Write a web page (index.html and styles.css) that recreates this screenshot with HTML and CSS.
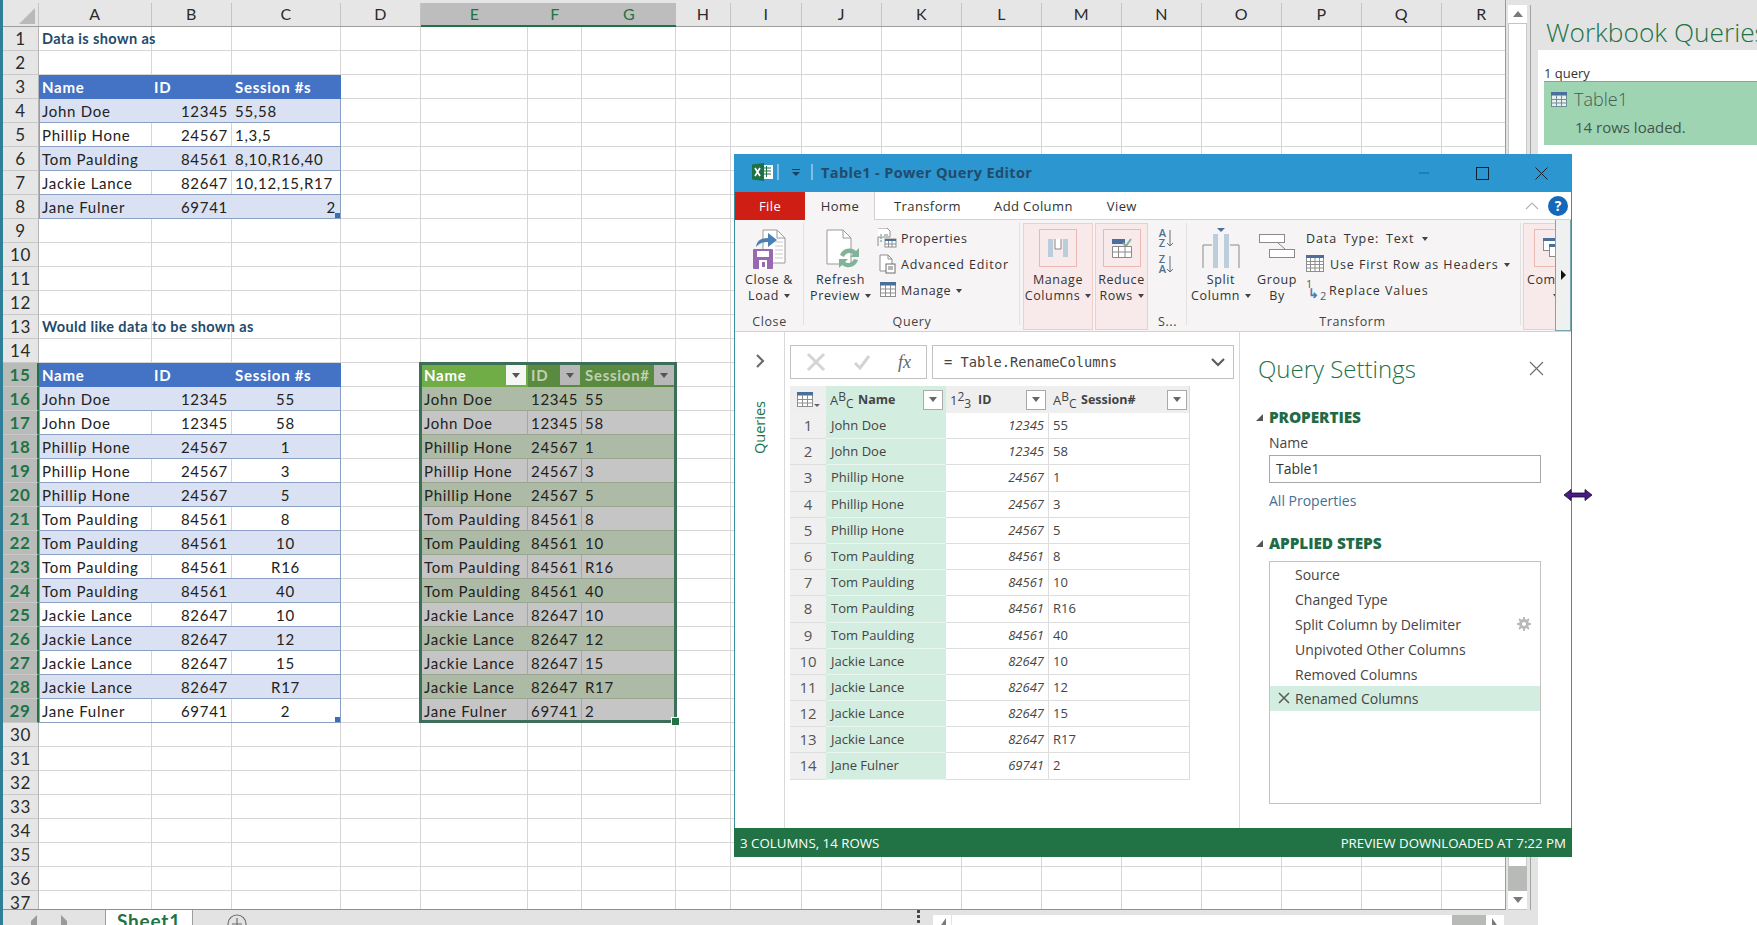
FILE: index.html
```html
<!DOCTYPE html>
<html lang="en">
<head>
<meta charset="utf-8">
<title>Table1 - Power Query Editor</title>
<link rel="stylesheet" href="styles.css">
</head>
<body>
<div class="app">
  <div class="strip"></div>
  <div class="excel">
    <div class="sheet-area">
      <div class="grid">
        <div class="col-head">
          <div class="corner"><svg width="16" height="16" viewBox="0 0 16 16"><path d="M16 0V16H0Z" fill="#b9b9b9"/></svg></div>
          <div class="ch">A</div><div class="ch">B</div><div class="ch">C</div><div class="ch">D</div>
          <div class="ch on">E</div><div class="ch on">F</div><div class="ch on">G</div>
          <div class="ch">H</div><div class="ch">I</div><div class="ch">J</div><div class="ch">K</div><div class="ch">L</div><div class="ch">M</div><div class="ch">N</div><div class="ch">O</div><div class="ch">P</div><div class="ch">Q</div><div class="ch">R</div>
        </div>
        <div class="rows">
          <div class="row"><div class="rh">1</div><div class="cell title">Data is shown as</div></div>
          <div class="row"><div class="rh">2</div></div>
          <div class="row"><div class="rh">3</div><div class="cell thead">Name</div><div class="cell thead">ID</div><div class="cell thead">Session #s</div></div>
          <div class="row odd"><div class="rh">4</div><div class="cell t a">John Doe</div><div class="cell t num">12345</div><div class="cell t z">55,58</div></div>
          <div class="row even"><div class="rh">5</div><div class="cell t a">Phillip Hone</div><div class="cell t num">24567</div><div class="cell t z">1,3,5</div></div>
          <div class="row odd"><div class="rh">6</div><div class="cell t a">Tom Paulding</div><div class="cell t num">84561</div><div class="cell t z">8,10,R16,40</div></div>
          <div class="row even"><div class="rh">7</div><div class="cell t a">Jackie Lance</div><div class="cell t num">82647</div><div class="cell t z">10,12,15,R17</div></div>
          <div class="row odd"><div class="rh">8</div><div class="cell t a">Jane Fulner</div><div class="cell t num">69741</div><div class="cell t z num">2<i class="grip"></i></div></div>
          <div class="row"><div class="rh">9</div></div>
          <div class="row"><div class="rh">10</div></div>
          <div class="row"><div class="rh">11</div></div>
          <div class="row"><div class="rh">12</div></div>
          <div class="row"><div class="rh">13</div><div class="cell title">Would like data to be shown as</div></div>
          <div class="row"><div class="rh">14</div></div>
          <div class="row"><div class="rh on">15</div><div class="cell thead">Name</div><div class="cell thead">ID</div><div class="cell thead">Session #s</div><div class="cell shead active e">Name<b class="fb white"></b></div><div class="cell shead">ID<b class="fb"></b></div><div class="cell shead">Session#<b class="fb"></b></div></div>
          <div class="row odd"><div class="rh on">16</div><div class="cell t a">John Doe</div><div class="cell t num">12345</div><div class="cell t mid">55</div><div class="cell s e">John Doe</div><div class="cell s num">12345</div><div class="cell s">55</div></div>
          <div class="row even"><div class="rh on">17</div><div class="cell t a">John Doe</div><div class="cell t num">12345</div><div class="cell t mid">58</div><div class="cell s e">John Doe</div><div class="cell s num">12345</div><div class="cell s">58</div></div>
          <div class="row odd"><div class="rh on">18</div><div class="cell t a">Phillip Hone</div><div class="cell t num">24567</div><div class="cell t mid">1</div><div class="cell s e">Phillip Hone</div><div class="cell s num">24567</div><div class="cell s">1</div></div>
          <div class="row even"><div class="rh on">19</div><div class="cell t a">Phillip Hone</div><div class="cell t num">24567</div><div class="cell t mid">3</div><div class="cell s e">Phillip Hone</div><div class="cell s num">24567</div><div class="cell s">3</div></div>
          <div class="row odd"><div class="rh on">20</div><div class="cell t a">Phillip Hone</div><div class="cell t num">24567</div><div class="cell t mid">5</div><div class="cell s e">Phillip Hone</div><div class="cell s num">24567</div><div class="cell s">5</div></div>
          <div class="row even"><div class="rh on">21</div><div class="cell t a">Tom Paulding</div><div class="cell t num">84561</div><div class="cell t mid">8</div><div class="cell s e">Tom Paulding</div><div class="cell s num">84561</div><div class="cell s">8</div></div>
          <div class="row odd"><div class="rh on">22</div><div class="cell t a">Tom Paulding</div><div class="cell t num">84561</div><div class="cell t mid">10</div><div class="cell s e">Tom Paulding</div><div class="cell s num">84561</div><div class="cell s">10</div></div>
          <div class="row even"><div class="rh on">23</div><div class="cell t a">Tom Paulding</div><div class="cell t num">84561</div><div class="cell t mid">R16</div><div class="cell s e">Tom Paulding</div><div class="cell s num">84561</div><div class="cell s">R16</div></div>
          <div class="row odd"><div class="rh on">24</div><div class="cell t a">Tom Paulding</div><div class="cell t num">84561</div><div class="cell t mid">40</div><div class="cell s e">Tom Paulding</div><div class="cell s num">84561</div><div class="cell s">40</div></div>
          <div class="row even"><div class="rh on">25</div><div class="cell t a">Jackie Lance</div><div class="cell t num">82647</div><div class="cell t mid">10</div><div class="cell s e">Jackie Lance</div><div class="cell s num">82647</div><div class="cell s">10</div></div>
          <div class="row odd"><div class="rh on">26</div><div class="cell t a">Jackie Lance</div><div class="cell t num">82647</div><div class="cell t mid">12</div><div class="cell s e">Jackie Lance</div><div class="cell s num">82647</div><div class="cell s">12</div></div>
          <div class="row even"><div class="rh on">27</div><div class="cell t a">Jackie Lance</div><div class="cell t num">82647</div><div class="cell t mid">15</div><div class="cell s e">Jackie Lance</div><div class="cell s num">82647</div><div class="cell s">15</div></div>
          <div class="row odd"><div class="rh on">28</div><div class="cell t a">Jackie Lance</div><div class="cell t num">82647</div><div class="cell t mid">R17</div><div class="cell s e">Jackie Lance</div><div class="cell s num">82647</div><div class="cell s">R17</div></div>
          <div class="row even"><div class="rh on">29</div><div class="cell t a">Jane Fulner</div><div class="cell t num">69741</div><div class="cell t mid">2<i class="grip"></i></div><div class="cell s e">Jane Fulner</div><div class="cell s num">69741</div><div class="cell s">2</div></div>
          <div class="row"><div class="rh">30</div></div>
          <div class="row"><div class="rh">31</div></div>
          <div class="row"><div class="rh">32</div></div>
          <div class="row"><div class="rh">33</div></div>
          <div class="row"><div class="rh">34</div></div>
          <div class="row"><div class="rh">35</div></div>
          <div class="row"><div class="rh">36</div></div>
          <div class="row"><div class="rh">37</div></div>
          <div class="selection"><i class="sel-handle"></i></div>
        </div>
      </div>
      <div class="vscroll">
        <div class="sb-btn"><svg width="10" height="6" viewBox="0 0 10 6"><path d="M5 0L10 6H0Z" fill="#7a7a7a"/></svg></div>
        <div class="sb-track"></div>
        <div class="sb-thumb"></div>
        <div class="sb-btn"><svg width="10" height="6" viewBox="0 0 10 6"><path d="M0 0H10L5 6Z" fill="#7a7a7a"/></svg></div>
      </div>
    </div>
    <div class="tabs">
      <svg class="nav" width="46" height="15" viewBox="0 0 46 15"><path d="M0 11L6 5V15H0Z" fill="#9a9a9a"/><path d="M30 5L36 11V15H30Z" fill="#9a9a9a"/></svg>
      <div class="sheet-tab">Sheet1</div>
      <svg class="plus" width="20" height="15" viewBox="0 0 20 15"><circle cx="10" cy="14" r="9" fill="none" stroke="#6e6e6e" stroke-width="1.2"/><path d="M10 8V15M5 14H15" stroke="#6e6e6e" stroke-width="1.2"/></svg>
      <div class="dots"></div>
      <div class="hscroll">
        <div class="hs-btn"><svg width="7" height="10" viewBox="0 0 7 10"><path d="M7 0V10H0Z" fill="#7a7a7a"/></svg></div>
        <div class="hs-track"></div>
        <div class="hs-thumb"></div>
        <div class="hs-btn"><svg width="7" height="10" viewBox="0 0 7 10"><path d="M0 0V10H7Z" fill="#7a7a7a"/></svg></div>
      </div>
    </div>
  </div>
  <aside class="pane">
    <div class="pane-head">Workbook Queries</div>
    <div class="pane-body">
      <div class="pane-count">1 query</div>
      <div class="pane-card">
        <div class="pane-name">
          <svg width="16" height="15" viewBox="0 0 16 15"><rect x=".5" y=".5" width="15" height="14" fill="#e8f0ee" stroke="#6f8f94"/><rect width="16" height="3.5" fill="#4a6f9c"/><path d="M0 7.5H16M0 11H16M5.5 3V15M10.5 3V15" stroke="#6f8f94"/></svg>
          <span>Table1</span>
        </div>
        <div class="pane-loaded">14 rows loaded.</div>
      </div>
    </div>
  </aside>
</div>

<section class="modal">
  <header class="titlebar">
    <svg class="xl" width="21" height="18" viewBox="0 0 21 18"><rect x="8" y="2" width="13" height="14" fill="#fff"/><path d="M11 5H19M11 8H19M11 11H19M14.500 3V14" stroke="#1e7145"/><path d="M0 1.500L12 0V18L0 16.500Z" fill="#1e7145"/><path d="M3 5L8 13M8 5L3 13" stroke="#fff" stroke-width="1.700"/></svg>
    <i class="tb-sep"></i>
    <svg class="qat" width="8" height="7" viewBox="0 0 8 7"><path d="M0 0H8V1H0ZM0 3H8L4 7Z" fill="#1c3f5e"/></svg>
    <i class="tb-sep"></i>
    <div class="title">Table1 - Power Query Editor</div>
    <div class="winbtns">
      <svg width="12" height="12" viewBox="0 0 12 12"><path d="M1 6H11" stroke="#1567b5"/></svg>
      <svg width="13" height="13" viewBox="0 0 13 13"><rect x=".5" y=".5" width="12" height="12" fill="none" stroke="#10202e"/></svg>
      <svg width="13" height="13" viewBox="0 0 13 13"><path d="M.5 .5L12.500 12.500M12.500 .5L.5 12.500" stroke="#10202e"/></svg>
    </div>
  </header>
  <nav class="tabbar">
    <div class="tab file">File</div>
    <div class="tab home">Home</div>
    <div class="tab transform">Transform</div>
    <div class="tab addcol">Add Column</div>
    <div class="tab view">View</div>
    <svg class="collapse" width="14" height="8" viewBox="0 0 14 8"><path d="M1 7L7 1L13 7" fill="none" stroke="#b5b5b5" stroke-width="1.200"/></svg>
    <div class="help">?</div>
  </nav>
  <div class="ribbon">
    <div class="group g-close">
      <div class="g-body">
        <div class="big w-close">
          <svg class="ic" width="34" height="40" viewBox="0 0 34 40"><path d="M11 1H25L33 9V34H11Z" fill="#fff" stroke="#9a9a9a"/><path d="M25 1V9H33" fill="none" stroke="#9a9a9a"/><path d="M23 13H31M23 17H31M23 21H31M23 25H31M23 29H31" stroke="#c8c8c8"/><path d="M4 18C5 11 10 9 16 9V4L25 11L16 18V13C11 13 8 14 4 18Z" fill="#4a80b4"/><rect x="1" y="20" width="20" height="20" rx="1" fill="#9a68b0"/><rect x="5" y="22" width="12" height="6" fill="#fff"/><rect x="7" y="31" width="8" height="9" fill="#fff"/><rect x="10" y="33" width="3" height="5" fill="#9a68b0"/></svg>
          <span class="lbl">Close &amp;<br>Load <i class="caret"></i></span>
        </div>
      </div>
      <div class="g-label">Close</div>
    </div>
    <div class="group g-query">
      <div class="g-body">
        <div class="big w-refresh">
          <svg class="ic" width="36" height="40" viewBox="0 0 36 40"><path d="M4 1H20L28 9V35H4Z" fill="#fff" stroke="#9a9a9a"/><path d="M20 1V9H28" fill="none" stroke="#9a9a9a"/><path d="M17 26A10 10 0 0 1 33 22L36 19V28H27L30 25A6 6 0 0 0 21 28Z" fill="#7fb49a"/><path d="M35 31A10 10 0 0 1 19 36L16 39V30H25L22 33A6 6 0 0 0 31 30Z" fill="#7fb49a"/></svg>
          <span class="lbl">Refresh<br>Preview <i class="caret"></i></span>
        </div>
        <div class="smalls q-smalls">
          <div class="small"><svg width="20" height="20" viewBox="0 0 20 20"><path d="M1 1H10L13 4V10H1V19" fill="#fff" stroke="#8e8e8e" transform="translate(0 -1)"/><path d="M3 7H5M7 7H11M3 10H5M3 13H5" stroke="#5f8f8f"/><rect x="8" y="11" width="11" height="8" fill="#fff" stroke="#8e8e8e"/><rect x="8" y="11" width="11" height="2" fill="#4a6f9c"/><path d="M8 16H19M11.500 13V19M15 13V19" stroke="#8e8e8e"/></svg><span>Properties</span></div>
          <div class="small wide"><svg width="20" height="20" viewBox="0 0 20 20"><path d="M3 1H11L15 5V17H3Z" fill="#fff" stroke="#8e8e8e"/><path d="M11 1V5H15" fill="none" stroke="#8e8e8e"/><rect x="9" y="10" width="9" height="9" fill="#fff" stroke="#6d6d6d"/><path d="M11 13H16M11 15H16" stroke="#6d6d6d"/></svg><span>Advanced Editor</span></div>
          <div class="small"><svg width="20" height="20" viewBox="0 0 20 20"><rect x="3.500" y="2.500" width="15" height="14" fill="#fff" stroke="#8e8e8e"/><rect x="3" y="2" width="16" height="3.500" fill="#4a6f9c"/><path d="M3 9H19M3 13H19M8.500 5V17M13.500 5V17" stroke="#8e8e8e"/></svg><span>Manage <i class="caret"></i></span></div>
        </div>
      </div>
      <div class="g-label">Query</div>
    </div>
    <div class="pink p-manage">
      <div class="pink-box"><svg width="20" height="20" viewBox="0 0 20 20"><rect x="0" y="1" width="5" height="18" fill="#b9cddd"/><rect x="15" y="1" width="5" height="18" fill="#b9cddd"/><path d="M7 1V11H13V1" fill="#fff" stroke="#888"/></svg></div>
      <span class="lbl">Manage<br>Columns <i class="caret"></i></span>
    </div>
    <div class="pink p-reduce">
      <div class="pink-box"><svg width="20" height="20" viewBox="0 0 20 20"><rect x="0" y="1" width="13" height="5" fill="#4a6f9c"/><path d="M11 5L14 8L19 1" fill="none" stroke="#7fb29a" stroke-width="2"/><path d="M.5 8.500H19.500V19.500H.5ZM0 14H20M6.500 8V20M13 8V20" fill="#fff" stroke="#8a8a8a"/></svg></div>
      <span class="lbl">Reduce<br>Rows <i class="caret"></i></span>
    </div>
    <div class="group g-sort">
      <div class="g-body sort-icons">
        <div class="sort"><span>A<br>Z</span><svg width="8" height="20" viewBox="0 0 8 20"><path d="M4 2V18M1 15L4 18L7 15" fill="none" stroke="#5e6f7c"/></svg></div>
        <div class="sort"><span>Z<br>A</span><svg width="8" height="20" viewBox="0 0 8 20"><path d="M4 2V18M1 15L4 18L7 15" fill="none" stroke="#5e6f7c"/></svg></div>
      </div>
      <div class="g-label">S...</div>
    </div>
    <div class="group g-transform">
      <div class="g-body">
        <div class="big w-split">
          <svg class="ic" width="38" height="42" viewBox="0 0 38 42"><path d="M15 0H23L19 4Z" fill="#4a6f9c"/><path d="M1 40V17H10M37 40V17H28" fill="none" stroke="#8a8a8a"/><rect x="11" y="6" width="5" height="34" fill="#bccddc"/><rect x="22" y="6" width="5" height="34" fill="#bccddc"/></svg>
          <span class="lbl">Split<br>Column <i class="caret"></i></span>
        </div>
        <div class="big w-group">
          <svg class="ic" width="38" height="42" viewBox="0 0 38 42"><rect x="1.500" y="6.500" width="25" height="8" fill="#fff" stroke="#8a8a8a"/><rect x="11.500" y="21.500" width="25" height="8" fill="#fff" stroke="#8a8a8a"/><path d="M20 15L27 21" stroke="#8a8a8a"/></svg>
          <span class="lbl">Group<br>By</span>
        </div>
        <div class="smalls tf">
          <div class="small plain"><span>Data Type: Text <i class="caret"></i></span></div>
          <div class="small"><svg width="18" height="18" viewBox="0 0 18 18"><rect x=".5" y=".5" width="17" height="16" fill="#fff" stroke="#8e8e8e"/><rect width="18" height="3" fill="#4a6f9c"/><path d="M0 6.500H18M0 9.500H18M0 13H18M4.500 3V17M9 3V17M13.500 3V17" stroke="#8e8e8e"/></svg><span>Use First Row as Headers <i class="caret"></i></span></div>
          <div class="small"><span class="repl"><em>1</em><b>&#8627;</b><em>2</em></span><span>Replace Values</span></div>
        </div>
      </div>
      <div class="g-label">Transform</div>
    </div>
    <div class="pink p-combine">
      <div class="pink-box"><svg width="20" height="20" viewBox="0 0 20 20"><rect x=".5" y=".5" width="12" height="12" fill="#fff" stroke="#8a8a8a"/><rect width="13" height="3" fill="#4a6f9c"/><rect x="6.500" y="6.500" width="12" height="12" fill="#fff" stroke="#8a8a8a"/><rect x="6" y="6" width="13" height="3" fill="#4a6f9c"/></svg></div>
      <span class="lbl">Combine<br><i class="caret"></i></span>
    </div>
    <div class="rib-scroll"><svg width="5" height="10" viewBox="0 0 5 10"><path d="M0 0L5 5L0 10Z" fill="#111"/></svg></div>
  </div>
  <div class="content">
    <div class="queries">
      <svg width="10" height="14" viewBox="0 0 10 14"><path d="M2 1L8 7L2 13" fill="none" stroke="#6c6c6c" stroke-width="2.200"/></svg>
      <div class="q-label">Queries</div>
    </div>
    <div class="main">
      <div class="fbar">
        <div class="fx">
          <svg width="20" height="20" viewBox="0 0 20 20"><path d="M2 2L18 18M18 2L2 18" stroke="#d4d4d4" stroke-width="3"/></svg>
          <svg width="18" height="16" viewBox="0 0 18 16"><path d="M2 9L7 14L16 2" fill="none" stroke="#d4d4d4" stroke-width="3"/></svg>
          <span class="fx-t">fx</span>
        </div>
        <div class="formula"><span>= Table.RenameColumns</span><svg width="14" height="9" viewBox="0 0 14 9"><path d="M1 1L7 7L13 1" fill="none" stroke="#5c5c5c" stroke-width="2.200"/></svg></div>
      </div>
      <div class="dt">
        <div class="dt-row dt-head">
          <div class="dh dh-i"><svg width="23" height="16" viewBox="0 0 23 16"><rect x=".5" y=".5" width="15" height="14" fill="#fff" stroke="#8e8e8e"/><rect width="16" height="3.500" fill="#4a6f9c"/><path d="M0 7.500H16M0 11H16M5.500 3V15M10.500 3V15" stroke="#8e8e8e"/><path d="M17 12H23L20 15Z" fill="#666"/></svg></div>
          <div class="dh dh-n"><span class="ty">A<sup>B</sup><sub>C</sub></span><b>Name</b><i class="dd"></i></div>
          <div class="dh"><span class="ty">1<sup>2</sup><sub>3</sub></span><b>ID</b><i class="dd"></i></div>
          <div class="dh"><span class="ty">A<sup>B</sup><sub>C</sub></span><b>Session#</b><i class="dd"></i></div>
        </div>
        <div class="dt-row"><div class="di">1</div><div class="dn">John Doe</div><div class="dv">12345</div><div class="ds">55</div></div>
        <div class="dt-row"><div class="di">2</div><div class="dn">John Doe</div><div class="dv">12345</div><div class="ds">58</div></div>
        <div class="dt-row"><div class="di">3</div><div class="dn">Phillip Hone</div><div class="dv">24567</div><div class="ds">1</div></div>
        <div class="dt-row"><div class="di">4</div><div class="dn">Phillip Hone</div><div class="dv">24567</div><div class="ds">3</div></div>
        <div class="dt-row"><div class="di">5</div><div class="dn">Phillip Hone</div><div class="dv">24567</div><div class="ds">5</div></div>
        <div class="dt-row"><div class="di">6</div><div class="dn">Tom Paulding</div><div class="dv">84561</div><div class="ds">8</div></div>
        <div class="dt-row"><div class="di">7</div><div class="dn">Tom Paulding</div><div class="dv">84561</div><div class="ds">10</div></div>
        <div class="dt-row"><div class="di">8</div><div class="dn">Tom Paulding</div><div class="dv">84561</div><div class="ds">R16</div></div>
        <div class="dt-row"><div class="di">9</div><div class="dn">Tom Paulding</div><div class="dv">84561</div><div class="ds">40</div></div>
        <div class="dt-row"><div class="di">10</div><div class="dn">Jackie Lance</div><div class="dv">82647</div><div class="ds">10</div></div>
        <div class="dt-row"><div class="di">11</div><div class="dn">Jackie Lance</div><div class="dv">82647</div><div class="ds">12</div></div>
        <div class="dt-row"><div class="di">12</div><div class="dn">Jackie Lance</div><div class="dv">82647</div><div class="ds">15</div></div>
        <div class="dt-row"><div class="di">13</div><div class="dn">Jackie Lance</div><div class="dv">82647</div><div class="ds">R17</div></div>
        <div class="dt-row"><div class="di">14</div><div class="dn">Jane Fulner</div><div class="dv">69741</div><div class="ds">2</div></div>
      </div>
    </div>
    <div class="settings">
      <div class="set-head"><span>Query Settings</span><svg width="15" height="15" viewBox="0 0 15 15"><path d="M1 1L14 14M14 1L1 14" stroke="#6b6b6b" stroke-width="1.100"/></svg></div>
      <div class="sec"><i class="tri"></i>PROPERTIES</div>
      <div class="set-name">Name</div>
      <div class="set-input">Table1</div>
      <div class="set-link">All Properties</div>
      <div class="sec sec2"><i class="tri"></i>APPLIED STEPS</div>
      <div class="steps">
        <div class="step">Source</div>
        <div class="step">Changed Type</div>
        <div class="step">Split Column by Delimiter<svg class="gear" width="14" height="14" viewBox="0 0 14 14"><circle cx="7" cy="7" r="3.500" fill="none" stroke="#b9b9b9" stroke-width="3"/><path d="M7 0V3M7 11V14M0 7H3M11 7H14M2 2L4 4M10 10L12 12M12 2L10 4M4 10L2 12" stroke="#b9b9b9" stroke-width="2"/></svg></div>
        <div class="step">Unpivoted Other Columns</div>
        <div class="step">Removed Columns</div>
        <div class="step cur"><svg class="del" width="12" height="12" viewBox="0 0 12 12"><path d="M1 1L11 11M11 1L1 11" stroke="#5d5d5d" stroke-width="1.600"/></svg>Renamed Columns</div>
      </div>
    </div>
  </div>
  <footer class="status"><span>3 COLUMNS, 14 ROWS</span><span>PREVIEW DOWNLOADED AT 7:22 PM</span></footer>
</section>
<svg class="cursor" width="30" height="14" viewBox="0 0 30 14"><path d="M1 7L8 1.500V5H22V1.500L29 7L22 12.500V9H8V12.500Z" fill="#4b1a86" stroke="#14082a" stroke-width=".8"/></svg>
</body>
</html>
```
FILE: styles.css
```css
* { box-sizing: border-box; }
html, body { margin: 0; height: 925px; overflow: hidden; background: #fff; }
body { font-family: "Open Sans", "Liberation Sans", sans-serif; color: #333; }
i, em { font-style: normal; }

.app { display: flex; width: 1757px; height: 925px; }
.strip { width: 3px; background: #2f7f96; flex: none; }
.excel { width: 1535px; flex: none; display: flex; flex-direction: column; background: #e3e3e3; }
.sheet-area { display: flex; height: 910px; }
.sheet-area::after { content: ""; width: 1px; margin: 5px 0 0 3px; background: #a3a3a3; flex: none; }

.grid {
  --cols: 36px 113px 80px 109px 80px 107px 54px 94px 55px 71px repeat(8, 80px) 80px;
  --g: #d6d6d6;
  --v: linear-gradient(var(--g), var(--g)) no-repeat;
  width: 1503px; height: 910px; overflow: hidden; background: #fff;
  border-right: 1px solid #9b9b9b; border-bottom: 1px solid #8f8f8f;
  font-family: Lato, "Liberation Sans", sans-serif;
}
.col-head {
  display: grid; grid-template-columns: var(--cols); height: 27px;
  padding-top: 3px; background: #e6e6e6; border-bottom: 1px solid #9e9e9e;
}
.corner { display: flex; justify-content: flex-end; align-items: flex-end; padding: 0 3px 2px 0; border-right: 1px solid #c4c4c4; }
.ch { text-align: center; font-size: 16px; line-height: 22px; letter-spacing: .5px; color: #2b2b2b; border-right: 1px solid #c4c4c4; }
.ch.on { background: #bdbdbd; color: #217346; border-right: 0; margin-bottom: -1px; border-bottom: 2px solid #217346; }

.rows {
  position: relative; height: 883px;
  background:
    var(--v) 148px 0/1px 100%, var(--v) 228px 0/1px 100%, var(--v) 337px 0/1px 100%,
    var(--v) 417px 0/1px 100%, var(--v) 524px 0/1px 100%, var(--v) 578px 0/1px 100%,
    var(--v) 672px 0/1px 100%, var(--v) 727px 0/1px 100%, var(--v) 798px 0/1px 100%,
    var(--v) 878px 0/1px 100%, var(--v) 958px 0/1px 100%, var(--v) 1038px 0/1px 100%,
    var(--v) 1118px 0/1px 100%, var(--v) 1198px 0/1px 100%, var(--v) 1278px 0/1px 100%,
    var(--v) 1358px 0/1px 100%, var(--v) 1438px 0/1px 100%;
}
.row {
  display: grid; grid-template-columns: var(--cols); height: 24px;
  background: var(--v) 0 100%/100% 1px;
}
.rh {
  background: #e6e6e6; text-align: center; font-size: 17px; line-height: 23px; letter-spacing: .6px;
  color: #2b2b2b; border-bottom: 1px solid #c9c9c9; border-right: 1px solid #b5b5b5;
}
.rh.on { background: #b9bbb9; color: #217346; font-weight: 700; border-right: 2px solid #217346; }
.cell {
  font-size: 15px; line-height: 24px; height: 24px; padding: 0 4px 0 3px; letter-spacing: .72px;
  white-space: nowrap; color: #222; position: relative;
}
.title { font-weight: 700; color: #111; }
.thead { background: #4472c4; color: #fff; font-weight: 700; }
.thead:nth-child(3) { padding-left: 2px; }
.odd .t { background: #d9e1f2; }
.t { border-bottom: 1px solid #8a9fc4; }
.t.a { border-left: 1px solid #8a9fc4; padding-left: 2px; }
.t.z, .t.mid { border-right: 1px solid #8a9fc4; }
.num { text-align: right; }
.mid { text-align: center; }
.grip { position: absolute; right: 0; bottom: 0; width: 5px; height: 5px; background: #3b6fb6; }

.e { grid-column: 6; }
.s { border-bottom: 1px solid #98a68f; }
.odd .s { background: #adbaa5; }
.even .s { background: #c5c5c5; border-right: 1px solid #a6a6a6; }
.shead {
  display: flex; justify-content: space-between; align-items: center; padding: 0 2px 0 3px;
  background: #5a8a3f; color: #bfd1b5; font-weight: 700;
}
.shead.active { background: #70ad47; color: #fff; }
.fb { display: flex; align-items: center; justify-content: center; width: 20px; height: 20px; background: #b7b7b7; flex: none; }
.fb.white { background: #f6f6f6; }
.fb::after { content: ""; border: 4px solid transparent; border-top: 5px solid #555; border-bottom: 0; }
.selection { position: absolute; left: 416px; top: 335px; width: 258px; height: 361px; border: 3px solid #3d6e59; pointer-events: none; }
.sel-handle { position: absolute; right: -6px; bottom: -6px; width: 7px; height: 7px; background: #217346; border: 1px solid #fff; box-sizing: content-box; }

.vscroll { display: flex; flex-direction: column; width: 19px; margin: 5px 0 0 2px; }
.sb-btn { height: 19px; background: #fff; display: flex; align-items: center; justify-content: center; border-bottom: 1px solid #c4c4c4; flex: none; }
.sb-track { flex: 1; background: #fff; border-left: 1px solid #c9c9c9; border-right: 1px solid #c9c9c9; }
.sb-thumb { height: 25px; background: #b8bab8; flex: none; }
.tabs { height: 15px; display: flex; overflow: hidden; background: #e3e3e3; }
.nav { margin-left: 28px; flex: none; }
.sheet-tab {
  margin-left: 28px; width: 88px; height: 20px; background: #fff; border: 1px solid #9e9e9e; border-top: 0;
  font: 700 19px/22px Lato, sans-serif; letter-spacing: .8px; color: #217346; text-align: center; flex: none; padding-top: 0;
}
.plus { margin-left: 34px; flex: none; }
.dots { margin-left: 670px; width: 3px; height: 15px; flex: none; background: radial-gradient(circle, #444 1.4px, transparent 1.6px) 0 9px/3px 5px repeat-y; }
.hscroll { margin-left: 13px; width: 571px; display: flex; flex: none; padding-top: 5px; }
.hs-btn { width: 18px; background: #fff; display: flex; align-items: flex-start; justify-content: center; padding-top: 3px; flex: none; }
.hs-track { flex: 1; background: #fff; margin-left: 1px; }
.hs-thumb { width: 34px; background: #b8bab8; flex: none; }

.pane { flex: 1; min-width: 0; overflow: hidden; background: #fff; }
.pane-head {
  height: 50px; background: #e3e3e3; padding-left: 8px;
  font: 300 26.300px/64px "Open Sans", sans-serif; color: #217346; white-space: nowrap; overflow: hidden;
}
.pane-body { padding-left: 6px; }
.pane-count { height: 31px; padding-top: 14px; font-size: 13px; line-height: 18px; color: #333; }
.pane-card { height: 64px; background: #9fd4b3; border-top: 1px solid #9a9a9a; }
.pane-name { display: flex; align-items: center; gap: 7px; padding: 0 0 0 7px; height: 34px; font-size: 18px; color: #4a5a52; font-weight: 300; }
.pane-loaded { padding-left: 31px; margin-top: -2px; font-size: 15px; line-height: 26px; color: #43564c; }

.modal {
  position: absolute; left: 734px; top: 154px; width: 838px; height: 703px;
  display: flex; flex-direction: column; background: #fff;
  border-left: 1px solid #3a8fa0; border-right: 1px solid #3a8fa0;
}
.titlebar { height: 38px; background: #2b96cf; display: flex; align-items: center; flex: none; padding: 0 0 2px 18px; margin: 0 -1px; }
.xl { flex: none; }
.tb-sep { width: 2px; height: 16px; background: #7fbfe3; margin: 0 13px 0 4px; flex: none; }
.qat { margin-right: 11px; flex: none; }
.qat + .tb-sep { margin: 0 8px 0 0; }
.title { font-size: 14.500px; letter-spacing: .38px; color: #234b6b; flex: 1; }
.winbtns { display: flex; align-items: center; gap: 46px; padding: 2px 24px 0 0; }

.tabbar { height: 28px; display: flex; align-items: stretch; flex: none; border-bottom: 1px solid #d2d2d2; font-size: 13px; letter-spacing: .4px; position: relative; }
.tab { display: flex; align-items: center; justify-content: center; color: #333; }
.tab.file { width: 70px; background: #cf1f14; color: #fff; margin-bottom: -1px; }
.tab.home { width: 70px; background: #f6f4f5; border-right: 1px solid #d2d2d2; margin-bottom: -1px; padding-left: 1px; }
.tab.transform { margin-left: 19px; }
.tab.addcol { margin-left: 33px; }
.tab.view { margin-left: 34px; }
.collapse { margin: 10px 9px 0 auto; }
.help {
  width: 20px; height: 20px; border-radius: 50%; background: #1568b8; color: #fff; font-weight: 700; font-size: 14px;
  line-height: 20px; text-align: center; margin: 4px 3px 0 0; letter-spacing: 0;
}

.ribbon { height: 112px; display: flex; flex: none; background: #f6f4f5; border-bottom: 1px solid #d2d2d2; position: relative; overflow: hidden; font-size: 12.500px; letter-spacing: .6px; color: #333; }
.group { display: flex; flex-direction: column; flex: none; position: relative; }
.group::after { content: ""; position: absolute; right: 0; top: 3px; bottom: 6px; width: 1px; background: #e2e0e1; }
.g-body { height: 92px; display: flex; }
.g-label { height: 19px; text-align: center; font-size: 12.500px; line-height: 19px; color: #444; }
.g-close { width: 69px; }
.g-query { width: 216px; }
.g-sort { width: 39px; }
.g-transform { width: 334px; }
.g-transform .g-label { margin-right: 3px; }
.big { display: flex; flex-direction: column; align-items: center; text-align: center; flex: none; }
.ic { height: 42px; margin-top: 8px; flex: none; }
.lbl { line-height: 16px; white-space: nowrap; margin-top: 2px; display: block; }
.caret { display: inline-block; border: 3px solid transparent; border-top: 4px solid #444; border-bottom: 0; vertical-align: 2px; margin-left: 1px; }
.w-close { width: 68px; }
.w-refresh { width: 73px; }
.smalls { display: flex; flex-direction: column; padding-top: 5px; flex: none; }
.small { height: 26px; display: flex; align-items: center; gap: 3px; white-space: nowrap; }
.q-smalls .small { gap: 4px; }
.small svg { flex: none; }
.small.wide { letter-spacing: .85px; }

.pink { flex: none; height: 107px; margin-top: 3px; background: #f8eaea; border: 1px solid #efcdc9; display: flex; flex-direction: column; align-items: center; text-align: center; }
.pink-box { width: 38px; height: 38px; margin-top: 5px; border: 1px solid #eab9b3; display: flex; align-items: center; justify-content: center; flex: none; }
.pink .lbl { margin-top: 5px; }
.p-manage { width: 70px; margin-left: 3px; }
.p-reduce { width: 53px; margin-left: 2px; }
.p-combine { width: 50px; margin-left: 2px; align-items: flex-start; padding-left: 3px; }
.p-combine .pink-box { margin-left: 7px; }
.sort-icons { flex-direction: column; align-items: center; padding: 7px 2px 0 0; gap: 5px; }
.sort { display: flex; align-items: center; height: 21px; }
.sort span { font-size: 11px; line-height: 10px; letter-spacing: 0; font-weight: 600; color: #4a7196; }
.w-split { width: 66px; margin-left: 1px; }
.w-group { width: 46px; }
.tf { margin-left: 6px; letter-spacing: .9px; }
.tf .plain { word-spacing: 2.500px; }
.tf .small svg { margin-right: 3px; }
.repl { width: 20px; height: 24px; position: relative; display: block; flex: none; letter-spacing: 0; font-size: 11px; }
.repl em { position: absolute; left: 0; top: 0; line-height: 12px; color: #5a5a5a; }
.repl em:last-child { left: 14px; top: 12px; }
.repl b { position: absolute; left: 2px; top: 8px; color: #4a7fb0; font-size: 13px; line-height: 14px; }
.rib-scroll { position: absolute; right: 0; top: 0; bottom: 0; width: 16px; background: #eff0f0; border: 1px solid #7aa7ae; border-top: 0; display: flex; align-items: center; justify-content: center; }

.content { flex: 1; display: flex; min-height: 0; }
.queries { width: 50px; flex: none; border-right: 1px solid #d9d9d9; display: flex; flex-direction: column; align-items: center; padding-top: 22px; }
.q-label { writing-mode: vertical-rl; transform: rotate(180deg); margin-top: 33px; color: #217346; font-size: 14.500px; }
.main { width: 455px; flex: none; padding: 13px 0 0 5px; border-right: 1px solid #d9d9d9; }
.fbar { display: flex; gap: 5px; height: 34px; }
.fx { width: 137px; border: 1px solid #c2c2c2; display: flex; align-items: center; padding: 0 15px 0 15px; justify-content: space-between; }
.fx-t { font: italic 18px "Liberation Serif", serif; color: #666; }
.formula { width: 302px; border: 1px solid #c2c2c2; display: flex; align-items: center; justify-content: space-between; padding: 0 8px 0 11px; font: 13.700px "DejaVu Sans Mono", "Liberation Mono", monospace; color: #444; }
.dt { width: 400px; margin-top: 7px; border-right: 1px solid #dcdcdc; }
.dt-row { display: grid; grid-template-columns: 36px 120px 103px 141px; height: 26.200px; }
.dt-head { height: 27px; background: #efefef; }
.dh { display: flex; align-items: center; padding: 0 3px 0 4px; font-size: 12.500px; color: #444; }
.dh-i { padding-left: 7px; }
.dh-n { background: #d3eee0; }
.dh b { flex: 1; margin-left: 9px; font-weight: 700; }
.ty { font-size: 13px; white-space: nowrap; color: #444; width: 19px; }
.ty sup, .ty sub { font-size: 12px; line-height: 0; }
.ty sup { vertical-align: 4px; }
.ty sub { vertical-align: -3px; }
.dd { width: 20px; height: 20px; background: #fff; border: 1px solid #aaa; display: flex; align-items: center; justify-content: center; flex: none; }
.dd::after { content: ""; border: 4px solid transparent; border-top: 5px solid #666; border-bottom: 0; }
.di, .dn, .dv, .ds { line-height: 25px; border-bottom: 1.500px solid #dedede; font-size: 13px; color: #444; white-space: nowrap; }
.di { background: #f0f0f0; text-align: center; font-size: 15px; color: #555; }
.dn { background: #d3eee0; padding-left: 5px; border-bottom-color: #e8f6ef; }
.dv { text-align: right; font-style: italic; padding-right: 4px; border-right: 1.500px solid #dedede; }
.ds { padding-left: 4px; }

.settings { flex: 1; padding: 17px 0 0 15px; min-width: 0; }
.set-head { display: flex; justify-content: space-between; align-items: center; padding: 0 27px 0 3px; height: 38px; font-size: 24px; font-weight: 300; color: #217346; }
.sec { position: relative; margin-top: 21px; padding-left: 14px; height: 20px; line-height: 20px; font-size: 15.400px; font-weight: 800; color: #1f6b47; letter-spacing: -.1px; }
.tri { position: absolute; left: 1px; top: 6px; width: 0; height: 0; border-style: solid; border-width: 0 0 7px 7px; border-color: transparent transparent #555 transparent; }
.set-name { margin: 5px 0 0 14px; height: 20px; line-height: 20px; font-size: 14px; color: #444; }
.set-input { margin: 2px 0 0 14px; width: 272px; height: 28px; border: 1px solid #a8a8a8; font-size: 14px; line-height: 26px; padding-left: 6px; color: #333; }
.set-link { margin: 8px 0 0 14px; height: 20px; line-height: 20px; font-size: 14px; color: #3f6f95; }
.sec2 { margin-top: 23px; }
.steps { margin: 7px 0 0 14px; width: 272px; height: 243px; border: 1px solid #c2c2c2; }
.step { display: flex; align-items: center; position: relative; height: 24.900px; padding-left: 25px; font-size: 14px; color: #444; white-space: nowrap; }
.step.cur { background: #d3eee0; }
.gear { position: absolute; right: 9px; top: 5px; }
.del { position: absolute; left: 8px; top: 6px; }

.status { height: 29px; margin: 0 -1px; background: #217346; color: #fff; display: flex; justify-content: space-between; align-items: center; padding: 0 6px; font-size: 13.300px; flex: none; }
.cursor { position: absolute; left: 1563px; top: 488px; }
```
